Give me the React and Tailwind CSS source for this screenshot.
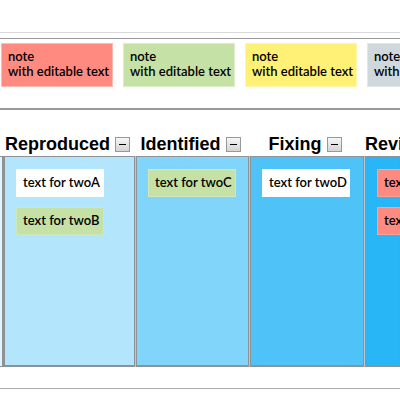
import React from "react";

const palette = [
  { id: "red", color: "bg-[#ff8a80]" },
  { id: "green", color: "bg-[#c5e1a5]" },
  { id: "yellow", color: "bg-[#fff176]" },
  { id: "grey", color: "bg-[#cfd8dc]" },
];

const columns = [
  {
    title: "Reproduced",
    color: "bg-[#b3e5fc]",
    notes: [
      { text: "text for twoA", color: "bg-white" },
      { text: "text for twoB", color: "bg-[#c5e1a5]" },
    ],
  },
  {
    title: "Identified",
    color: "bg-[#81d4fa]",
    notes: [{ text: "text for twoC", color: "bg-[#c5e1a5]" }],
  },
  {
    title: "Fixing",
    color: "bg-[#4fc3f7]",
    notes: [{ text: "text for twoD", color: "bg-white" }],
  },
  {
    title: "Review",
    color: "bg-[#29b6f6]",
    clipped: true,
    notes: [
      { text: "text for twoE", color: "bg-[#ff8a80]" },
      { text: "text for twoF", color: "bg-[#ff8a80]" },
    ],
  },
];

function PaletteNote({ color }) {
  return (
    <li className={`w-28 shrink-0 border border-white/40 px-1.5 pt-[5px] pb-[7px] ${color}`}>
      note
      <br />
      with editable text
    </li>
  );
}

function Column({ title, color, clipped, notes }) {
  return (
    <section className="min-w-0">
      <header className={`flex h-6 items-center gap-[5px] whitespace-nowrap ${clipped ? "" : "justify-center pr-1"}`}>
        <h2 className="font-['Liberation_Sans',Arial,sans-serif] text-lg leading-6 font-bold">{title}</h2>
        <button
          type="button"
          aria-label={`Collapse ${title}`}
          className="flex size-[15px] shrink-0 items-center justify-center border border-[#999] bg-linear-to-b from-[#f6f6f6] to-[#d4d4d4]"
        >
          <span className="h-px w-[7px] bg-black" />
        </button>
      </header>
      <ul className={`flex h-[211px] flex-col items-start gap-2.5 border border-b-2 border-[#8c9296] pt-3 pl-[11px] shadow-[1px_0_#c4c4c4] ${color}`}>
        {notes.map((note) => (
          <li key={note.text} className={`h-7 w-[88px] border border-white/20 px-1.5 leading-[25px] whitespace-nowrap ${note.color}`}>
            {note.text}
          </li>
        ))}
      </ul>
    </section>
  );
}

export default function App() {
  return (
    <main className="overflow-hidden bg-white pt-8 pb-2.5 font-[Lato,sans-serif] text-[13px] leading-[15px] font-semibold text-black">
      <div className="h-1.5 border-t border-[#d8d8d8]" />
      <ul className="flex h-[72px] items-start gap-2.5 border-t border-b-2 border-[#999] pt-1 pl-px whitespace-nowrap">
        {palette.map((note) => (
          <PaletteNote key={note.id} color={note.color} />
        ))}
      </ul>
      <div className="grid grid-cols-[3px_131fr_113fr_114fr_35fr] gap-x-px border-b border-[#aaa] pt-[22px] pb-[21px]">
        <div className="mt-6 border-y border-r border-[#8c9296] bg-[#e1f5fe] shadow-[1px_0_#8c9296]" />
        {columns.map((column) => (
          <Column key={column.title} {...column} />
        ))}
      </div>
    </main>
  );
}
